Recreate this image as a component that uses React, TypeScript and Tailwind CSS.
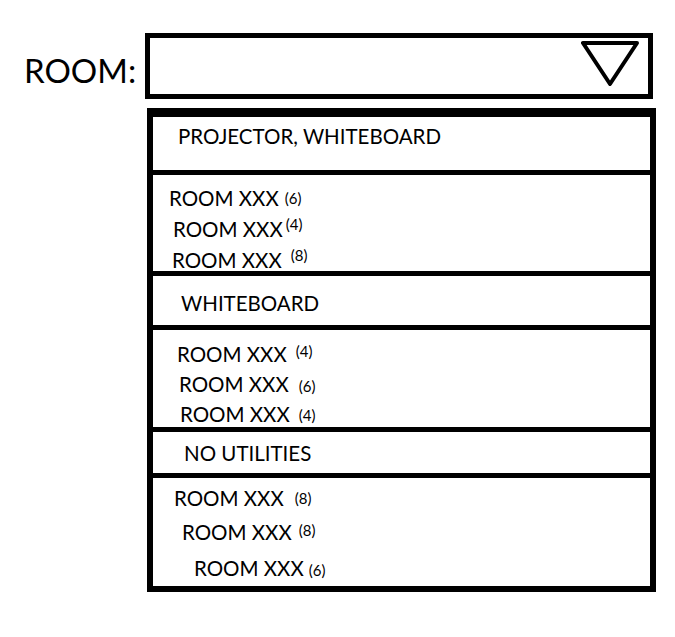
const rooms = [
  {
    title: "PROJECTOR, WHITEBOARD",
    headCls: "h-[58px] pt-[7px] pl-[25px]",
    listCls: "h-[101px] pt-[8px]",
    items: [
      { n: 6, row: "h-[30px] pl-[16px]", sup: "ml-[6px] align-[2px]" },
      { n: 4, row: "h-[31px] pl-[20px]", sup: "ml-[3px] align-[7px]" },
      { n: 8, row: "h-[30px] pl-[19px]", sup: "ml-[9px] align-[7px]" },
    ],
  },
  {
    title: "WHITEBOARD",
    headCls: "h-[54px] pt-[15px] pl-[28px]",
    listCls: "h-[102px] pt-[9px]",
    items: [
      { n: 4, row: "h-[30px] pl-[24px]", sup: "ml-[9px] align-[5px]" },
      { n: 6, row: "h-[30px] pl-[26px]", sup: "ml-[10px] align-[0px]" },
      { n: 4, row: "h-[30px] pl-[27px]", sup: "ml-[9px] align-[1px]" },
    ],
  },
  {
    title: "NO UTILITIES",
    headCls: "h-[46px] pt-[9px] pl-[31px]",
    listCls: "h-[108px] pt-[5px]",
    items: [
      { n: 8, row: "h-[30px] pl-[21px]", sup: "ml-[11px] align-[2px]" },
      { n: 8, row: "h-[38px] pl-[29px]", sup: "ml-[7px] align-[4px]" },
      { n: 6, row: "h-[35px] pl-[41px]", sup: "ml-[5px] align-[0px]" },
    ],
  },
];

const DownTriangle = () => (
  <svg width="58" height="45" viewBox="0 0 58 45">
    <polygon
      points="2,2 56,2 29,43"
      fill="none"
      stroke="#000"
      strokeWidth="4"
      strokeLinejoin="round"
    />
  </svg>
);

export default function App() {
  return (
    <div
      className="min-h-screen bg-white pt-[33px] pl-[24px] text-black"
      style={{ fontFamily: "Lato, 'Open Sans', sans-serif" }}
    >
      <div className="flex items-center">
        <span className="w-[121px] text-[33px] leading-none pt-[8px]">ROOM:</span>
        <div className="w-[508px] h-[66px] border-[5px] border-black flex justify-end items-start pt-[3px] pr-[9px]">
          <DownTriangle />
        </div>
      </div>

      <div className="ml-[123px] mt-[9px] w-[509px] border-[6px] border-t-[9px] border-black">
        {rooms.map((group, gi) => (
          <div key={group.title}>
            <div className={`${group.headCls} border-b-[5px] border-black`}>
              <div className="h-[24px] flex items-center text-[20.5px]">
                {group.title}
              </div>
            </div>
            <div
              className={`${group.listCls} ${
                gi < rooms.length - 1 ? "border-b-[5px] border-black" : ""
              }`}
            >
              {group.items.map((item, i) => (
                <div key={i} className={`${item.row} flex items-center`}>
                  <span className="text-[20.5px] leading-none">
                    ROOM XXX
                    <span className={`${item.sup} text-[15px]`}>({item.n})</span>
                  </span>
                </div>
              ))}
            </div>
          </div>
        ))}
      </div>
    </div>
  );
}
